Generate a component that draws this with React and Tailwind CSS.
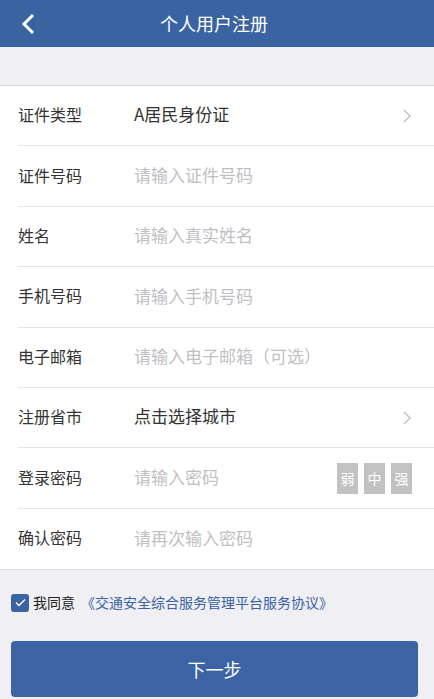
import { useState } from "react";

const rows = [
  { label: "证件类型", value: "A居民身份证", arrow: true },
  { label: "证件号码", placeholder: "请输入证件号码" },
  { label: "姓名", placeholder: "请输入真实姓名" },
  { label: "手机号码", placeholder: "请输入手机号码" },
  { label: "电子邮箱", placeholder: "请输入电子邮箱（可选）" },
  { label: "注册省市", value: "点击选择城市", arrow: true },
  { label: "登录密码", placeholder: "请输入密码", strength: true },
  { label: "确认密码", placeholder: "请再次输入密码" },
];

function Chevron() {
  return (
    <svg width="10" height="16" viewBox="0 0 10 16" fill="none" className="mt-[3px]">
      <path d="M2 2l6 6-6 6" stroke="#c4c4c8" strokeWidth="1.5" />
    </svg>
  );
}

export default function App() {
  const [agree, setAgree] = useState(true);

  return (
    <div
      className="min-h-screen bg-[#efeff4]"
      style={{ fontFamily: '"Noto Sans CJK SC", "Noto Sans", sans-serif' }}
    >
      <div className="relative flex h-[47px] items-center justify-center bg-[#3a63a2] pr-[6px]">
        <button className="absolute left-[20px] top-[12px]">
          <svg width="16" height="24" viewBox="0 0 16 24" fill="none">
            <path d="M13 3L4 12l9 9" stroke="white" strokeWidth="3" />
          </svg>
        </button>
        <h1 className="text-[18px] text-white">个人用户注册</h1>
      </div>

      <div className="mt-[38px] border-y border-[#dcdce0] bg-white">
        {rows.map((row, i) => (
          <div key={i} className="pl-[18px]">
            <div
              className={
                "flex h-[60.4px] items-center pb-[3px] pr-[22px] " +
                (i < rows.length - 1 ? "border-b border-[#e4e4e6]" : "")
              }
            >
              <span className="w-[116px] text-[16px] text-[#333]">{row.label}</span>
              <span
                className={
                  "flex-1 text-[17px] " + (row.value ? "text-[#333]" : "text-[#c0c0c4]")
                }
              >
                {row.value || row.placeholder}
              </span>
              {row.arrow && <Chevron />}
              {row.strength && (
                <div className="mt-[3px] flex gap-[6px]">
                  {["弱", "中", "强"].map((s) => (
                    <span
                      key={s}
                      className="flex h-[31px] w-[21px] items-center justify-center bg-[#c2c2c2] text-[14px] text-white"
                    >
                      {s}
                    </span>
                  ))}
                </div>
              )}
            </div>
          </div>
        ))}
      </div>

      <div className="mt-[22px] flex items-center pl-[11px]">
        <button
          onClick={() => setAgree(!agree)}
          className="flex h-[18px] w-[18px] items-center justify-center rounded-[3px] bg-[#3a63a2]"
        >
          {agree && (
            <svg width="11" height="9" viewBox="0 0 11 9" fill="none">
              <path d="M1 4.5l3 3L10 1.5" stroke="white" strokeWidth="1.4" />
            </svg>
          )}
        </button>
        <span className="ml-[4px] text-[14px] text-[#222]">我同意</span>
        <span className="ml-[6px] text-[14px] text-[#3a63a2]">
          《交通安全综合服务管理平台服务协议》
        </span>
      </div>

      <div className="px-[11px] pt-[28px]">
        <button className="flex h-[56px] w-[407px] items-center justify-center rounded-[4px] bg-[#3c64a4] text-[18px] text-white">
          下一步
        </button>
      </div>
    </div>
  );
}
